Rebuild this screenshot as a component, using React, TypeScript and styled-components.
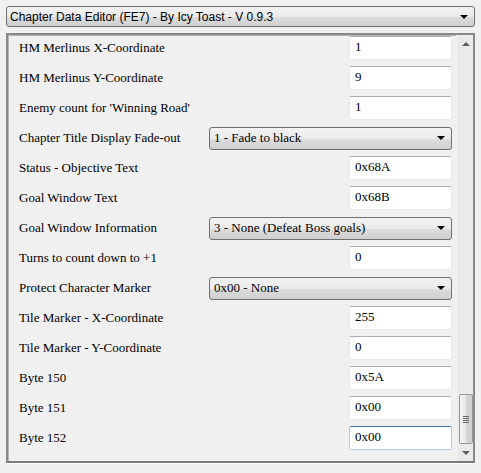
import styled, { createGlobalStyle } from "styled-components";

const GlobalStyle = createGlobalStyle`
  html, body {
    margin: 0;
    padding: 0;
    background: #f0f0f0;
  }
`;

const Window = styled.div`
  width: 481px;
  height: 473px;
  box-sizing: border-box;
  padding: 6px 6px 0 6px;
  background: #f0f0f0;
  overflow: hidden;
`;

const Combo = styled.div<{ $serif?: boolean }>`
  box-sizing: border-box;
  display: flex;
  align-items: center;
  justify-content: space-between;
  border: 1px solid #707070;
  border-radius: 3px;
  background: linear-gradient(#f2f2f2 0%, #ebebeb 50%, #dddddd 51%, #cfcfcf 100%);
  color: #000;
  padding: 0 6px 0 ${(p) => (p.$serif ? "4px" : "3px")};
  font-family: ${(p) =>
    p.$serif ? '"Liberation Serif", "Times New Roman", serif' : '"Liberation Sans", Arial, sans-serif'};
  font-size: ${(p) => (p.$serif ? "13px" : "12px")};
  white-space: nowrap;
`;

const TopCombo = styled(Combo)`
  width: 469px;
  height: 21px;
`;

const Arrow = styled.span`
  width: 0;
  height: 0;
  border-left: 4px solid transparent;
  border-right: 4px solid transparent;
  border-top: 4px solid #000;
`;

const Panel = styled.div`
  margin-top: 6px;
  width: 469px;
  height: 430px;
  box-sizing: border-box;
  border: 2px solid;
  border-color: #8a8a8a #8a8a8a #7a7a7a #8a8a8a;
  box-shadow: inset 1px 1px 0 #b5b5b5, 0 1px 0 #fff;
  display: flex;
  overflow: hidden;
`;

const List = styled.div`
  flex: 1;
  margin-top: -2px;
  padding-left: 11px;
`;

const Row = styled.div`
  height: 30px;
  display: flex;
  align-items: center;
`;

const Label = styled.div`
  width: 190px;
  font-family: "Liberation Serif", "Times New Roman", serif;
  font-size: 13px;
  color: #000;
  white-space: nowrap;
`;

const Spacer = styled.div`
  flex: 1;
`;

const TextBox = styled.div<{ $focus?: boolean }>`
  width: 103px;
  height: 24px;
  box-sizing: border-box;
  border: 1px solid ${(p) => (p.$focus ? "#a9cdee" : "#e3e9ef")};
  border-top-color: ${(p) => (p.$focus ? "#3d7bad" : "#abadb3")};
  border-radius: 2px;
  background: #fff;
  padding: 2px 0 0 5px;
  margin-right: 4px;
  font-family: "Liberation Serif", "Times New Roman", serif;
  font-size: 13px;
  color: #000;
`;

const DropDown = styled(Combo)`
  width: 243px;
  height: 23px;
  margin-right: 4px;
`;

const ScrollBar = styled.div`
  width: 17px;
  display: flex;
  flex-direction: column;
  align-items: center;
  background: #eaeaea;
  border-left: 1px solid #f4f4f4;
`;

const ScrollBtn = styled.div<{ $down?: boolean }>`
  height: 17px;
  width: 17px;
  display: flex;
  align-items: center;
  justify-content: center;
  &::after {
    content: "";
    width: 0;
    height: 0;
    border-left: 4px solid transparent;
    border-right: 4px solid transparent;
    ${(p) => (p.$down ? "border-top: 4px solid #606060;" : "border-bottom: 4px solid #606060;")}
  }
`;

const Track = styled.div`
  flex: 1;
  width: 100%;
  display: flex;
  flex-direction: column;
  justify-content: flex-end;
  align-items: center;
`;

const Thumb = styled.div`
  width: 14px;
  height: 50px;
  box-sizing: border-box;
  border: 1px solid #979797;
  border-radius: 2px;
  background: linear-gradient(to right, #f3f3f3 0%, #e8e8e8 45%, #d6d6d6 55%, #cfcfcf 100%);
  display: flex;
  flex-direction: column;
  align-items: center;
  justify-content: center;
  gap: 1px;
`;

const Grip = styled.span`
  width: 6px;
  height: 1px;
  background: #6a6a6a;
`;

type Field =
  | { label: string; kind: "text"; value: string; focus?: boolean }
  | { label: string; kind: "combo"; value: string };

const fields: Field[] = [
  { label: "HM Merlinus X-Coordinate", kind: "text", value: "1" },
  { label: "HM Merlinus Y-Coordinate", kind: "text", value: "9" },
  { label: "Enemy count for 'Winning Road'", kind: "text", value: "1" },
  { label: "Chapter Title Display Fade-out", kind: "combo", value: "1 - Fade to black" },
  { label: "Status - Objective Text", kind: "text", value: "0x68A" },
  { label: "Goal Window Text", kind: "text", value: "0x68B" },
  { label: "Goal Window Information", kind: "combo", value: "3 - None (Defeat Boss goals)" },
  { label: "Turns to count down to +1", kind: "text", value: "0" },
  { label: "Protect Character Marker", kind: "combo", value: "0x00 - None" },
  { label: "Tile Marker - X-Coordinate", kind: "text", value: "255" },
  { label: "Tile Marker - Y-Coordinate", kind: "text", value: "0" },
  { label: "Byte 150", kind: "text", value: "0x5A" },
  { label: "Byte 151", kind: "text", value: "0x00" },
  { label: "Byte 152", kind: "text", value: "0x00", focus: true },
];

function App() {
  return (
    <Window>
      <GlobalStyle />
      <TopCombo>
        Chapter Data Editor (FE7) - By Icy Toast - V 0.9.3
        <Arrow />
      </TopCombo>
      <Panel>
        <List>
          {fields.map((f) => (
            <Row key={f.label}>
              <Label>{f.label}</Label>
              <Spacer />
              {f.kind === "combo" ? (
                <DropDown $serif>
                  {f.value}
                  <Arrow />
                </DropDown>
              ) : (
                <TextBox $focus={f.focus}>{f.value}</TextBox>
              )}
            </Row>
          ))}
        </List>
        <ScrollBar>
          <ScrollBtn />
          <Track>
            <Thumb>
              <Grip />
              <Grip />
              <Grip />
              <Grip />
            </Thumb>
          </Track>
          <ScrollBtn $down />
        </ScrollBar>
      </Panel>
    </Window>
  );
}

export default App;
